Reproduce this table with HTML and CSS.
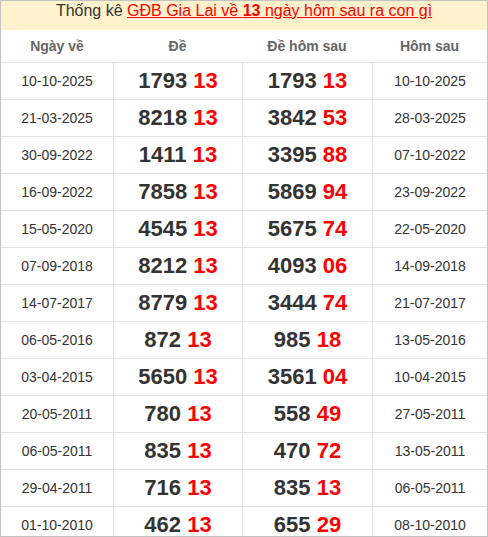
FILE: index.html
```html
<!DOCTYPE html>
<html lang="vi">
<head>
<meta charset="utf-8">
<title>Thống kê GĐB Gia Lai về 13</title>
<link rel="stylesheet" href="styles.css">
</head>
<body>
<div class="box">
  <div class="title">Thống kê <a class="link" href="#">GĐB Gia Lai về <b>13</b> ngày hôm sau ra con gì</a></div>
  <div class="table">
    <div class="row head">
      <div class="cell">Ngày về</div>
      <div class="cell">Đề</div>
      <div class="cell">Đề hôm sau</div>
      <div class="cell">Hôm sau</div>
    </div>
    <div class="row"><div class="cell">10-10-2025</div><div class="cell num">1793 <span class="red">13</span></div><div class="cell num">1793 <span class="red">13</span></div><div class="cell">10-10-2025</div></div>
    <div class="row"><div class="cell">21-03-2025</div><div class="cell num">8218 <span class="red">13</span></div><div class="cell num">3842 <span class="red">53</span></div><div class="cell">28-03-2025</div></div>
    <div class="row"><div class="cell">30-09-2022</div><div class="cell num">1411 <span class="red">13</span></div><div class="cell num">3395 <span class="red">88</span></div><div class="cell">07-10-2022</div></div>
    <div class="row"><div class="cell">16-09-2022</div><div class="cell num">7858 <span class="red">13</span></div><div class="cell num">5869 <span class="red">94</span></div><div class="cell">23-09-2022</div></div>
    <div class="row"><div class="cell">15-05-2020</div><div class="cell num">4545 <span class="red">13</span></div><div class="cell num">5675 <span class="red">74</span></div><div class="cell">22-05-2020</div></div>
    <div class="row"><div class="cell">07-09-2018</div><div class="cell num">8212 <span class="red">13</span></div><div class="cell num">4093 <span class="red">06</span></div><div class="cell">14-09-2018</div></div>
    <div class="row"><div class="cell">14-07-2017</div><div class="cell num">8779 <span class="red">13</span></div><div class="cell num">3444 <span class="red">74</span></div><div class="cell">21-07-2017</div></div>
    <div class="row"><div class="cell">06-05-2016</div><div class="cell num">872 <span class="red">13</span></div><div class="cell num">985 <span class="red">18</span></div><div class="cell">13-05-2016</div></div>
    <div class="row"><div class="cell">03-04-2015</div><div class="cell num">5650 <span class="red">13</span></div><div class="cell num">3561 <span class="red">04</span></div><div class="cell">10-04-2015</div></div>
    <div class="row"><div class="cell">20-05-2011</div><div class="cell num">780 <span class="red">13</span></div><div class="cell num">558 <span class="red">49</span></div><div class="cell">27-05-2011</div></div>
    <div class="row"><div class="cell">06-05-2011</div><div class="cell num">835 <span class="red">13</span></div><div class="cell num">470 <span class="red">72</span></div><div class="cell">13-05-2011</div></div>
    <div class="row"><div class="cell">29-04-2011</div><div class="cell num">716 <span class="red">13</span></div><div class="cell num">835 <span class="red">13</span></div><div class="cell">06-05-2011</div></div>
    <div class="row"><div class="cell">01-10-2010</div><div class="cell num">462 <span class="red">13</span></div><div class="cell num">655 <span class="red">29</span></div><div class="cell">08-10-2010</div></div>
  </div>
</div>
</body>
</html>
```

FILE: styles.css
```css
* { box-sizing: border-box; }
html, body { margin: 0; padding: 0; background: #fff; }
body { font-family: "Liberation Sans", Arial, sans-serif; color: #333; }

.box {
  width: 488px;
  height: 537px;
  border: 1px solid #c2c2c2;
  overflow: hidden;
  background: #fff;
}

.title {
  height: 29px;
  padding-top: 1px;
  background: #fff2cc;
  text-align: center;
  font-size: 16px;
  line-height: 18px;
  color: #333;
}
.link { color: #f00; text-decoration: underline; }
.link b { font-weight: bold; }

.row {
  display: grid;
  grid-template-columns: 112px 129px 130px 115px;
  height: 37px;
  border-top: 1px solid #e2e2e2;
}
.row.head {
  height: 32px;
  border-top: none;
}

.cell {
  display: flex;
  align-items: center;
  justify-content: center;
  font-size: 14px;
  color: #333;
  white-space: nowrap;
}
.row:not(.head) .cell + .cell { border-left: 1px solid #e2e2e2; }

.head .cell {
  font-weight: bold;
  color: #666;
}

.num {
  font-size: 22px;
  font-weight: bold;
  color: #333;
}
.red { color: #f00; margin-left: 0.28em; }
```
